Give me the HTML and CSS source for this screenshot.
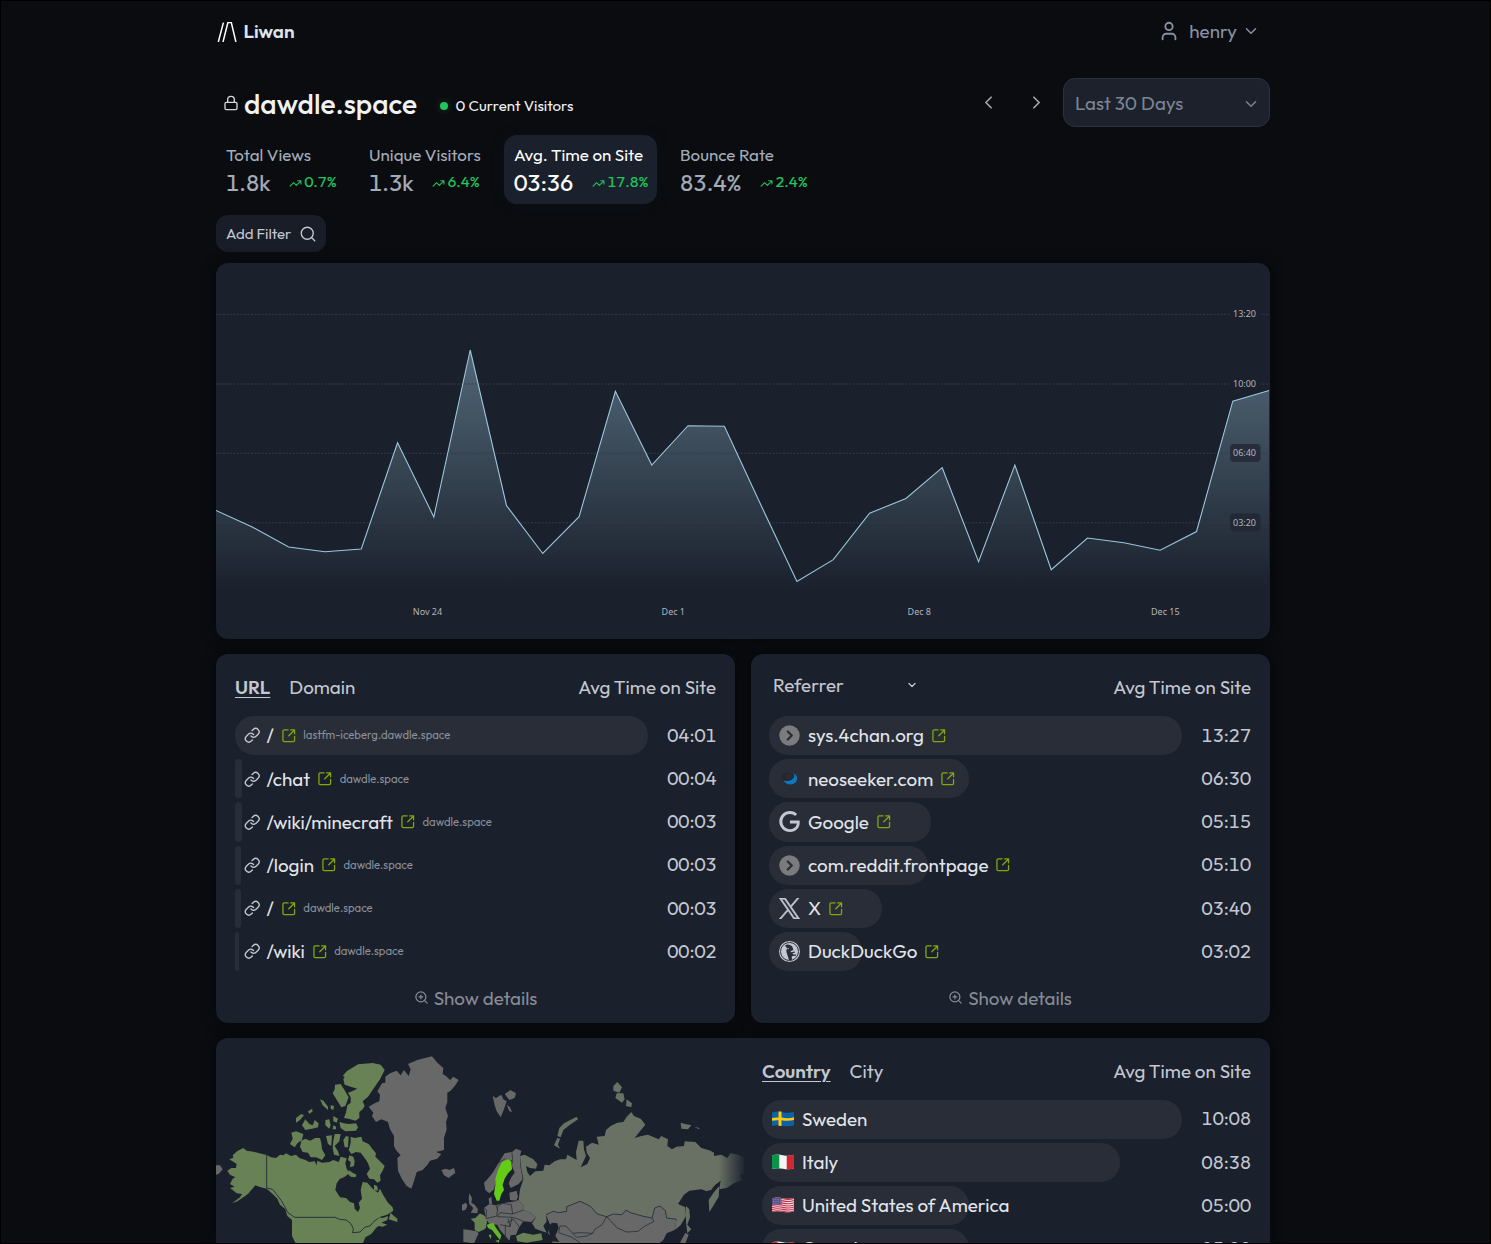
FILE: index.html
```html
<!DOCTYPE html>
<html lang="en">
<head>
<meta charset="utf-8">
<title>Liwan - dawdle.space</title>
<link rel="stylesheet" href="styles.css">
</head>
<body>
<svg class="defs" width="0" height="0" aria-hidden="true">
  <symbol id="ext" viewBox="0 0 24 24"><path d="M21 13v6a2 2 0 0 1-2 2H5a2 2 0 0 1-2-2V5a2 2 0 0 1 2-2h6M21 3l-9 9M15 3h6v6"/></symbol>
  <symbol id="link" viewBox="0 0 24 24"><path d="M10 13a5 5 0 0 0 7.54.54l3-3a5 5 0 0 0-7.07-7.07l-1.72 1.71M14 11a5 5 0 0 0-7.54-.54l-3 3a5 5 0 0 0 7.07 7.07l1.71-1.71"/></symbol>
  <symbol id="trend" viewBox="0 0 24 24"><path d="M16 7h6v6M22 7l-8.5 8.5-5-5L2 17"/></symbol>
  <symbol id="down" viewBox="0 0 24 24"><path d="m6 9 6 6 6-6"/></symbol>
  <symbol id="zoomin" viewBox="0 0 24 24"><circle cx="11" cy="11" r="8"/><path d="m21 21-4.35-4.35M11 8v6M8 11h6"/></symbol>
  <symbol id="go" viewBox="0 0 22 22"><circle cx="11" cy="11" r="10.7" fill="#7b7b7d" stroke="none"/><path d="m9.2 6.8 4.2 4.2-4.2 4.2" stroke="#282d38" stroke-width="2.4"/></symbol>
</svg>
<div class="page">
  <header class="top">
    <a class="brand">
      <svg class="logo" viewBox="0 0 20 20"><path d="M1.3 20 6.4.6M6 20 10.9.6h3.4L18.9 20"/></svg>
      <span>Liwan</span>
    </a>
    <div class="user">
      <svg class="i user-icon" viewBox="0 0 24 24"><circle cx="12" cy="7" r="4"/><path d="M19 21v-2a4 4 0 0 0-4-4H9a4 4 0 0 0-4 4v2"/></svg>
      <span>henry</span>
      <svg class="i user-caret"><use href="#down"/></svg>
    </div>
  </header>

  <section class="title-bar">
    <svg class="i lock" viewBox="0 0 24 24"><rect x="3" y="11" width="18" height="11" rx="2"/><path d="M7 11V7a5 5 0 0 1 10 0v4"/></svg>
    <h1>dawdle.space</h1>
    <span class="dot"></span>
    <span class="current">0 Current Visitors</span>
    <div class="range">
      <svg class="i" viewBox="0 0 24 24"><path d="m15 18-6-6 6-6"/></svg>
      <svg class="i" viewBox="0 0 24 24"><path d="m9 18 6-6-6-6"/></svg>
      <div class="select"><span>Last 30 Days</span><svg class="i"><use href="#down"/></svg></div>
    </div>
  </section>

  <section class="stats">
    <div class="stat views"><h2>Total Views</h2><p><b>1.8k</b><span class="up"><svg class="i"><use href="#trend"/></svg>0.7%</span></p></div>
    <div class="stat visitors"><h2>Unique Visitors</h2><p><b>1.3k</b><span class="up"><svg class="i"><use href="#trend"/></svg>6.4%</span></p></div>
    <div class="stat time active"><h2>Avg. Time on Site</h2><p><b>03:36</b><span class="up"><svg class="i"><use href="#trend"/></svg>17.8%</span></p></div>
    <div class="stat bounce"><h2>Bounce Rate</h2><p><b>83.4%</b><span class="up"><svg class="i"><use href="#trend"/></svg>2.4%</span></p></div>
  </section>

  <button class="filter"><span>Add Filter</span><svg class="i" viewBox="0 0 24 24"><circle cx="11" cy="11" r="8"/><path d="m21 21-4.35-4.35"/></svg></button>

  <section class="card chart">
    <svg viewBox="0 0 1054 376">
      <defs><linearGradient id="area" gradientUnits="userSpaceOnUse" x1="0" y1="87" x2="0" y2="329"><stop offset="0" stop-color="#9cc6db" stop-opacity=".43"/><stop offset="1" stop-color="#9cc6db" stop-opacity="0"/></linearGradient></defs>
      <path transform="scale(.9992 1)" fill="url(#area)" d="M0 247.5 36.3 264 72.7 284 109 288.7 145.4 286 181.7 179.7 218 254 254.4 87 290.7 242.5 327 290.5 363.4 253.7 399.7 128.3 436.1 202 472.4 162.7 508.8 163.2 545.1 241.5 581.4 318.5 617.8 296.7 654.1 250.2 690.5 235.5 726.8 204.7 763.2 298.7 799.5 202 835.9 306.7 872.2 275 908.6 279.7 944.9 287.2 981.3 268.5 1017.6 138.2 1054 127.5V329H0z"/>
      <g class="grid"><path d="M0 51.3H1054M0 121H1054M0 190.3H1054M0 259.8H1054"/></g>
      <path transform="scale(.9992 1)" class="line" d="M0 247.5 36.3 264 72.7 284 109 288.7 145.4 286 181.7 179.7 218 254 254.4 87 290.7 242.5 327 290.5 363.4 253.7 399.7 128.3 436.1 202 472.4 162.7 508.8 163.2 545.1 241.5 581.4 318.5 617.8 296.7 654.1 250.2 690.5 235.5 726.8 204.7 763.2 298.7 799.5 202 835.9 306.7 872.2 275 908.6 279.7 944.9 287.2 981.3 268.5 1017.6 138.2 1054 127.5"/>
      <g class="chip"><rect x="1014" y="42" width="30.500" height="18" rx="4" fill="#1a202c"/><rect x="1014" y="112" width="30.500" height="18" rx="4" fill="#1a202c"/><rect x="1014" y="181" width="30.500" height="18" rx="4"/><rect x="1014" y="250.500" width="30.500" height="18" rx="4" fill="#222835"/></g>
      <g class="tick"><text x="1028.500" y="54">13:20</text><text x="1028.500" y="124">10:00</text><text x="1028.500" y="193">06:40</text><text x="1028.500" y="263">03:20</text>
      <text x="211.500" y="352">Nov 24</text><text x="457.300" y="352">Dec 1</text><text x="703.300" y="352">Dec 8</text><text x="949.300" y="352">Dec 15</text></g>
    </svg>
  </section>

  <div class="pair">
    <section class="card table">
      <div class="head"><span class="tab on">URL</span><span class="tab">Domain</span><span class="metric">Avg Time on Site</span></div>
      <div class="rows urls">
        <div class="row"><div class="track"><div class="bar" style="width:100%"><svg class="i lk"><use href="#link"/></svg><span>/</span><svg class="i ext"><use href="#ext"/></svg><small>lastfm-iceberg.dawdle.space</small></div></div><em>04:01</em></div>
        <div class="row"><div class="track"><div class="bar" style="width:1.7%"><svg class="i lk"><use href="#link"/></svg><span>/chat</span><svg class="i ext"><use href="#ext"/></svg><small>dawdle.space</small></div></div><em>00:04</em></div>
        <div class="row"><div class="track"><div class="bar" style="width:1.6%"><svg class="i lk"><use href="#link"/></svg><span>/wiki/minecraft</span><svg class="i ext"><use href="#ext"/></svg><small>dawdle.space</small></div></div><em>00:03</em></div>
        <div class="row"><div class="track"><div class="bar" style="width:1.5%"><svg class="i lk"><use href="#link"/></svg><span>/login</span><svg class="i ext"><use href="#ext"/></svg><small>dawdle.space</small></div></div><em>00:03</em></div>
        <div class="row"><div class="track"><div class="bar" style="width:1.4%"><svg class="i lk"><use href="#link"/></svg><span>/</span><svg class="i ext"><use href="#ext"/></svg><small>dawdle.space</small></div></div><em>00:03</em></div>
        <div class="row"><div class="track"><div class="bar" style="width:1%"><svg class="i lk"><use href="#link"/></svg><span>/wiki</span><svg class="i ext"><use href="#ext"/></svg><small>dawdle.space</small></div></div><em>00:02</em></div>
      </div>
      <div class="details"><svg class="i"><use href="#zoomin"/></svg>Show details</div>
    </section>

    <section class="card table">
      <div class="head"><span class="dropdown">Referrer<svg class="i"><use href="#down"/></svg></span><span class="metric">Avg Time on Site</span></div>
      <div class="rows refs">
        <div class="row"><div class="track"><div class="bar" style="width:100%"><svg class="i fav"><use href="#go"/></svg><span>sys.4chan.org</span><svg class="i ext"><use href="#ext"/></svg></div></div><em>13:27</em></div>
        <div class="row"><div class="track"><div class="bar" style="width:48.4%"><svg class="fav" viewBox="0 0 22 22"><ellipse cx="11.800" cy="11" rx="7.200" ry="6.200" fill="#0c78c4"/><ellipse cx="9.400" cy="8.900" rx="6.700" ry="4.600" transform="rotate(-14 9.400 8.900)" fill="#292524"/><ellipse cx="10.800" cy="8.900" rx="4.600" ry="3.200" transform="rotate(-14 10.800 8.900)" fill="#272b34"/></svg><span>neoseeker.com</span><svg class="i ext"><use href="#ext"/></svg></div></div><em>06:30</em></div>
        <div class="row"><div class="track"><div class="bar" style="width:39.200%"><svg class="fav" viewBox="0 0 24 24"><path fill="#c3c7d1" d="M12.480 10.920v3.280h7.840c-.24 1.840-.853 3.187-1.787 4.133-1.147 1.147-2.933 2.400-6.053 2.400-4.827 0-8.600-3.893-8.600-8.720s3.773-8.720 8.600-8.720c2.600 0 4.507 1.027 5.907 2.347l2.307-2.307C18.747 1.440 16.133 0 12.480 0 5.867 0 .307 5.387.307 12s5.560 12 12.173 12c3.573 0 6.267-1.173 8.373-3.360 2.160-2.160 2.840-5.213 2.840-7.667 0-.76-.053-1.467-.173-2.053z"/></svg><span>Google</span><svg class="i ext"><use href="#ext"/></svg></div></div><em>05:15</em></div>
        <div class="row"><div class="track"><div class="bar" style="width:38.400%"><svg class="i fav"><use href="#go"/></svg><span>com.reddit.frontpage</span><svg class="i ext"><use href="#ext"/></svg></div></div><em>05:10</em></div>
        <div class="row"><div class="track"><div class="bar" style="width:27.300%"><svg class="fav" viewBox="0 0 24 24"><path fill="#c3c7d1" stroke="#c3c7d1" stroke-width=".7" d="M14.234 10.162 22.977 0h-2.072l-7.591 8.824L7.251 0H.258l9.168 13.343L.258 24H2.330l8.016-9.318L16.749 24h6.993zm-2.837 3.299-.929-1.329L3.076 1.560h3.182l5.965 8.532.929 1.329 7.754 11.090h-3.182z"/></svg><span>X</span><svg class="i ext"><use href="#ext"/></svg></div></div><em>03:40</em></div>
        <div class="row"><div class="track"><div class="bar" style="width:22.600%"><svg class="fav" viewBox="0 0 24 24"><circle cx="12" cy="12" r="12" fill="#c3c7d1"/><circle cx="12" cy="12" r="10.300" fill="none" stroke="#282d38" stroke-width="1.100"/><path fill="#282d38" d="M6.800 5.500 8.500 4.200c2.500-.5 5.800.4 7 3l.9 3-3.400 1.500 1 1.200 4-.8.300 1-3.300 1.300 2.500 1.200 1.500-.7.300 2.300-3.200-.4-1.600 1.300.5 3.300-3.500.6L8.700 13c-.6-2.200-.1-3.800 1-4.600L7.900 6.800z"/><circle cx="10.500" cy="8.700" r=".8" fill="#c3c7d1"/></svg><span>DuckDuckGo</span><svg class="i ext"><use href="#ext"/></svg></div></div><em>03:02</em></div>
      </div>
      <div class="details"><svg class="i"><use href="#zoomin"/></svg>Show details</div>
    </section>
  </div>

  <section class="card geo">
    <svg class="map" viewBox="0 6 1590 618">
      <defs><linearGradient id="fade" gradientUnits="userSpaceOnUse" x1="690" y1="0" x2="792" y2="0"><stop offset="0" stop-color="#697165"/><stop offset=".25" stop-color="#697165"/><stop offset="1" stop-color="#1f2630"/></linearGradient></defs>
      <g class="na">
        <path d="M40 370 52 365 50 358 64 345 82 336 92 344 112 347 130 352 152 357 165 364 180 366 192 356 202 358 210 352 225 360 240 356 250 366 268 372 280 378 296 376 302 388 304 374 318 380 340 378 352 372 368 378 374 362 392 366 388 382 392 398 400 412 384 424 372 428 362 442 358 462 372 484 390 486 402 498 414 502 416 518 426 528 432 516 428 500 438 488 434 462 440 438 454 440 470 458 486 470 492 458 502 478 516 500 530 514 532 524 514 536 488 544 500 546 516 540 514 552 496 560 514 566 500 572 488 570 480 576 466 594 448 604 440 624H240L228 600 228 552 214 540 208 520 192 506 184 488 170 474 152 458 134 454 118 448 104 464 96 474 82 484 64 496 48 502 72 484 78 474 62 472 50 462 42 456 56 452 42 444 50 428 58 424 42 416 34 404 46 396 60 396 62 384z"/>
        <path d="M392 106 426 85 470 81 494 86 506 102 492 130 474 156 456 182 440 196 446 210 440 220 430 228 430 246 418 254 398 248 384 246 390 230 394 208 404 200 404 184 396 170 408 166 424 158 404 152 386 146 382 130 386 122 380 120z"/>
        <path d="M357 146 374 144 384 160 398 184 388 210 376 214 364 194 350 172 356 160zM370 258 384 262 398 264 420 262 426 274 420 284 388 286 374 276zM312 190 322 194 336 212 336 222 320 208zM240 246 256 234 264 238 252 252 240 260zM276 226 288 218 290 226 280 234zM258 268 268 250 280 264 290 268 296 252 308 262 306 274 288 278 268 282zM328 252 340 250 344 268 340 278 328 268zM352 240 366 248 362 260 352 256zM344 208 354 210 352 222 344 218zM226 290 240 286 262 294 258 312 244 322 236 334 222 324 230 308zM256 314 268 308 282 314 298 306 312 306 316 322 318 340 328 358 318 372 300 364 284 364 276 350 260 348 252 332zM330 300 348 298 346 330 336 324zM356 294 374 294 370 316 356 330 366 346 370 360 354 356 350 336 352 314zM382 312 390 300 398 302 396 334 386 334zM404 302 416 306 436 302 440 316 458 324 470 340 480 352 478 362 492 376 506 390 500 404 492 418 494 434 484 440 474 430 460 428 452 414 462 398 456 382 446 366 434 350 420 348 406 354 398 342 404 320zM400 358 412 362 416 376 414 390 402 394 404 378 396 372zM398 402 410 410 422 416 418 424 404 422 396 414zM434 376 446 374 448 384 438 386zM474 446 484 450 486 464 474 462zM524 530 534 540 544 548 544 558 518 550zM352 268 360 272 360 280 350 280z"/>
        <path class="water" d="M388 348 398 356 398 366 382 364zM424 372 434 364 450 372 456 386 446 396 432 398 422 388zM418 410 434 406 448 420 456 434 440 432 430 424z"/>
        <path class="border" d="M152 357V456L170 460 184 478 196 494 206 512 216 530 236 544H358L370 550 390 552 404 562 412 578 410 590 432 588 446 574 462 570 474 556 488 546"/>
      </g>
      <path class="none" d="M576 84 604 72 648 61 664 80 682 96 680 114 690 120 702 132 712 122 728 132 718 148 704 164 694 170 694 198 688 216 696 240 690 258 692 280 684 306 684 342 660 348 676 354 664 368 642 374 636 384 620 402 602 408 594 436 586 458 572 450 558 430 546 404 544 366 554 358 540 342 534 330 534 300 522 280 516 258 496 250 480 258 468 240 472 230 458 212 476 202 490 196 492 176 484 166 498 142 508 140 508 122 522 112 542 104 554 118 564 102 578 120 584 100z"/>
      <path class="none" d="M676 402 690 398 700 402 714 396 718 410 698 426 684 418zM0 388 12 388 20 400 8 414 0 416zM760 472 768 486 766 500 776 506 786 520 784 532 764 530 772 516 760 504 758 486zM738 506 750 500 754 510 748 522 738 524zM742 580 760 582 782 586 788 592 774 622 742 618z"/>
      <path class="fr" d="M764 548 778 546 792 532 800 540 814 544 812 560 806 580 788 588 776 582 776 560z"/>
      <g transform="translate(792 0)">
        <path class="none" d="M38 180 48 186 64 176 70 190 80 196 72 220 62 244 50 226 44 208zM74 174 92 162 108 172 104 186 88 192zM80 206 90 214 96 228 88 226z"/>
        <path class="none" d="M12 440 22 430 38 410 56 380 74 352 96 348 108 338 124 344 120 360 122 396 128 430 116 444 92 456 86 442 94 424 104 410 96 390 98 374 82 370 66 380 58 402 48 432 42 460 28 472 16 462z"/>
        <path class="sw" d="M66 378 84 369 94 376 96 400 84 412 74 428 68 446 72 462 64 474 58 494 50 494 42 474 46 448 46 428 54 402z"/>
        <path class="none" d="M88 470 110 464 114 482 108 494 90 492zM26 488 34 482 36 504 28 504zM12 516 28 504 48 508 68 502 92 498 116 492 130 508 130 522 150 530 168 544 154 558 130 556 116 576 108 596 92 598 88 614 78 602 60 582 52 566 28 564 18 548zM198 536 220 526 236 530 260 526 260 512 300 496 330 510 352 534 380 542 400 534 426 536 438 522 452 530 486 540 516 546 524 516 540 510 556 524 560 546 590 550 584 582 560 592 550 612 536 624H216L220 606 204 592 210 566z"/>
        <path class="ru" d="M120 360 134 356 160 370 172 384 168 398 150 396 138 390 142 408 150 420 166 406 190 404 194 386 208 388 224 376 240 370 258 370 262 356 290 372 288 348 296 314 310 314 312 340 318 360 302 394 322 384 330 366 320 350 318 332 336 320 356 326 350 302 374 300 378 282 392 270 412 260 430 258 440 242 454 228 462 240 482 248 496 266 480 286 464 306 484 300 504 296 536 310 544 300 564 310 562 330 576 340 590 332 612 330 614 316 646 318 664 336 692 344 702 360 720 362 696 460 680 466 664 460 628 464 612 476 594 504 616 514 618 540 602 568 584 582 590 550 560 546 556 524 540 510 524 516 516 546 486 540 452 530 438 522 426 536 400 534 380 542 352 534 330 510 300 496 260 512 260 526 236 530 220 526 198 536 200 556 190 570 200 590 182 584 166 578 156 562 168 544 150 530 130 522 130 508 116 492 120 460 130 430 124 400z"/>
        <path fill="url(#fade)" d="M690 344 702 350 702 360 724 356 742 366 752 352 776 356 792 364 792 410 780 418 788 432 762 442 740 456 718 460 722 434 706 446 690 464z"/>
        <path class="ru" d="M290 242 294 250 270 266 250 282 242 304 232 300 238 276 252 262zM232 306 240 308 234 326 240 338 222 328zM412 138 426 154 418 170 400 164 400 150zM410 172 430 172 434 190 426 200 406 186zM440 190 456 202 454 214 438 210zM602 260 616 264 634 268 624 280 604 278zM642 272 658 276 658 280zM718 450 716 482 696 516 688 528 686 492 702 468zM618 510 628 520 630 544 622 566 634 580 622 592 618 560z"/>
        <path class="none" d="M616 590 626 596 616 622 600 620z"/>
        <path class="fr" d="M0 534 10 536 20 548 18 576 0 584zM108 600 130 590 160 596 184 592 188 612 166 616 140 620 112 616z"/>
        <path class="it" d="M20 566 40 560 46 572 64 598 60 612 52 602 36 582 24 576zM26 596 34 596 32 610zM46 614 58 612 56 620z"/>
        <path class="water" d="M216 560 232 562 236 576 226 600 238 618 216 616 208 590 204 572z"/>
        <path class="edge" d="M12 516 20 522 18 548 50 540 54 510M54 510 68 502 94 506 98 534 60 530 52 542 96 544 90 572 60 566M98 534 130 522M96 544 116 550 130 556M90 572 84 548M76 566 76 600M92 498 110 494M48 508 54 526M82 560 100 550 118 572M98 374 96 350M56 380 76 368M198 536 220 526 236 530 260 526 260 512 300 496 330 510 352 534 380 542 400 534 426 536 438 522 452 530 486 540 516 546 524 516 540 510 556 524 560 546 590 550M380 542 366 566 344 580 338 592 300 590 278 592 258 570 240 570M380 542 412 576 440 588 474 586 492 572 522 556 516 546M240 570 236 590 276 604 300 620M278 592 290 604 320 600 338 592"/>
      </g>
    </svg>
    <div class="places table">
      <div class="head"><span class="tab on">Country</span><span class="tab">City</span><span class="metric">Avg Time on Site</span></div>
      <div class="rows countries">
        <div class="row"><div class="track"><div class="bar" style="width:100%"><svg class="flag" viewBox="0 0 22 16"><path fill="#0b62a8" d="M0 1.500Q5-.3 11 1.200T22 .8V14.500Q17 16 11 14.800T0 15z"/><path fill="#ffcb05" d="M6.500.6h3V6.500Q16 8 22 6.300v2.800q-6 1.300-12.500.2V15l-3-.3V9.200Q3 9 0 9.700V7q3-.8 6.500-.5z"/></svg><span>Sweden</span></div></div><em>10:08</em></div>
        <div class="row"><div class="track"><div class="bar" style="width:85.200%"><svg class="flag" viewBox="0 0 22 16"><path fill="#f4f4f4" d="M0 1.500Q5-.3 11 1.200T22 .8V14.500Q17 16 11 14.800T0 15z"/><path fill="#0b9347" d="M0 1.500Q3.500.2 7.300.6v13.800Q3.500 14 0 15z"/><path fill="#cf2734" d="M14.700 1.500Q18 1.900 22 .8v13.700q-4 1.200-7.300.8z"/></svg><span>Italy</span></div></div><em>08:38</em></div>
        <div class="row"><div class="track"><div class="bar" style="width:49.300%"><svg class="flag" viewBox="0 0 22 16"><path fill="#efe3e6" d="M0 1.500Q5-.3 11 1.200T22 .8V14.500Q17 16 11 14.800T0 15z"/><path fill="none" stroke="#c4314b" stroke-width="1.100" d="M0 2Q5 .2 11 1.700T22 1.300M0 4.200Q5 2.400 11 3.900T22 3.500M0 6.400Q5 4.600 11 6.100T22 5.700M0 8.600Q5 6.800 11 8.300T22 7.900M0 10.700Q5 8.900 11 10.400T22 10M0 12.700Q5 10.900 11 12.400T22 12M0 14.700Q5 12.900 11 14.400T22 14"/><path fill="#514f86" d="M0 1.500Q5 .2 9.500.9v6.600Q4 7 0 8z"/><path stroke="#a9a8c8" stroke-width=".7" stroke-dasharray=".8 1" d="M1 2.800 9 2.200M1 4.600 9 4M1 6.400 9 5.800"/></svg><span>United States of America</span></div></div><em>05:00</em></div>
        <div class="row"><div class="track"><div class="bar" style="width:49.200%"><svg class="flag" viewBox="0 0 22 16"><path fill="#f4f4f4" d="M0 1.500Q5-.3 11 1.200T22 .8V14.500Q17 16 11 14.800T0 15z"/><path fill="#d8202c" d="M0 1.500Q3 .4 5.500.5v14Q3 14 0 15zM16.500 1.500Q19 1.700 22 .8v13.700q-3 1-5.500.9zM11 4l3 4-2.500 3h-1L8 8z"/></svg><span>Canada</span></div></div><em>05:00</em></div>
      </div>
    </div>
  </section>
</div>
</body>
</html>
```

FILE: styles.css
```css
* { box-sizing: border-box; }
html { background: #000; }
body {
  margin: 0;
  height: 1244px;
  overflow: hidden;
  border: 1px solid #000;
  background: #0a0c10;
  color: #c3c7d1;
  font: 18.8px/1.2 Outfit, Lato, sans-serif;
}
h1, h2, p { margin: 0; font-weight: 400; }
.defs { position: absolute; }
.i { fill: none; stroke: currentColor; stroke-width: 2; stroke-linecap: round; stroke-linejoin: round; flex: none; }
.page { width: 1054px; height: 1242px; overflow: clip; overflow-clip-margin: 20px; margin-left: 215px; display: flex; flex-direction: column; }

.top { height: 61px; display: flex; align-items: center; justify-content: space-between; padding: 0 10px 0 1px; }
.brand { display: flex; align-items: center; gap: 6.500px; color: #dfe3eb; font-weight: 600; font-size: 18.900px; }
.logo { width: 20px; height: 20px; fill: none; stroke: #fff; stroke-width: 1.5; }
.user { display: flex; align-items: center; color: #8891a4; }
.user-icon { width: 22px; height: 22px; margin-right: 9px; }
.user-caret { width: 18px; height: 18px; margin-left: 5px; }

.title-bar { height: 73px; display: flex; align-items: center; padding: 11px 0 0 7px; }
.lock { width: 16px; height: 16px; color: #d5d7dc; margin: -3px 5px 0 0; }
h1 { font-size: 28.2px; font-weight: 500; color: #f0f1f3; }
.dot { width: 8px; height: 8px; border-radius: 50%; background: #22c55e; box-shadow: 0 0 0 4px #0b1512; margin: 4px 7.500px 0 23px; }
.current { font-size: 15.100px; color: #f0f1f3; margin-top: 5px; }
.range { margin-left: auto; display: flex; align-items: center; margin-top: -3px; }
.range > .i { width: 21px; height: 21px; color: #a2a5ac; margin-right: 27px; }
.range > .i + .i { margin-right: 16px; }
.select { width: 207px; height: 49px; border: 1px solid #2a3140; border-radius: 12px; background: #1c212c; color: #7b8495; display: flex; align-items: center; justify-content: space-between; padding: 2px 9px 0 11px; }
.select .i { width: 18px; height: 18px; }

.stats { display: flex; gap: 12px; height: 69px; font-variant-numeric: tabular-nums; }
.stat { border-radius: 13px; padding: 10px 0 0 10px; color: #a4acba; white-space: nowrap; }
.stat h2 { font-size: 16.950px; line-height: 20px; }
.stat p { display: flex; align-items: center; height: 35px; }
.stat b { font-weight: 400; font-size: 22.600px; margin-right: 18.500px; -webkit-text-stroke: .2px currentColor; }
.up { display: flex; align-items: center; gap: 2.500px; color: #22c55e; font-size: 15.100px; -webkit-text-stroke: .15px currentColor; }
.up .i { width: 13px; height: 13px; margin-top: 3px; }
.views { width: 131px; }
.visitors { width: 133px; }
.time { width: 153px; margin-right: 1px; }
.active { background: #1a202c; color: #fff; box-shadow: 0 0 12px #0b1016; }

.filter { align-self: flex-start; width: 110px; height: 37px; margin-top: 11px; border: 0; border-radius: 12px; background: #181d28; color: #c3c7d1; font: 15px Outfit, Lato, sans-serif; display: flex; align-items: center; justify-content: space-between; padding: 0 9px 0 10px; }
.filter .i { width: 18px; height: 18px; stroke-width: 1.800; }

.card { background: #1a202c; border-radius: 12px; box-shadow: 0 0 14px #06080b; }
.chart { height: 376px; margin-top: 11px; overflow: hidden; }
.chart svg { display: block; width: 1054px; height: 376px; }
.grid { fill: none; stroke: #343c4b; stroke-width: 1; stroke-dasharray: 2 1.500; }
.line { fill: none; stroke: #9cc6db; stroke-width: 1.1; }
.chip { fill: #272d3a; }
.tick { font: 9px "Noto Sans", sans-serif; fill: #b3b6bd; text-anchor: middle; }

.pair { display: flex; gap: 16px; margin-top: 15px; }
.pair .card { width: 519px; height: 369px; }
.table { padding: 0 19px; }
.pair .table + .table { padding-left: 18px; }
.head { display: flex; align-items: center; height: 62px; padding-top: 5px; }
.tab { margin-right: 19px; }
.on { font-weight: 600; text-decoration: underline; text-decoration-thickness: 1px; text-underline-offset: 3px; }
.metric { margin-left: auto; }
.dropdown { display: flex; align-items: center; justify-content: space-between; width: 145px; margin: -4px 0 0 4px; }
.dropdown .i { width: 12px; height: 12px; stroke-width: 2.500; }
.rows { display: grid; gap: 4px; }
.row { display: flex; align-items: center; height: 39.200px; }
.track { flex: 1; margin-right: 19px; }
.refs .track, .countries .track { margin-right: 20px; }
.bar { height: 39.200px; border-radius: 19px; background: #282d38; color: #e1e4ea; display: flex; align-items: center; white-space: nowrap; }
.bar > * { flex: none; }
.row em { font-style: normal; width: 49px; display: flex; justify-content: flex-end; white-space: nowrap; font-variant-numeric: tabular-nums; padding-bottom: 1px; }
.urls em { margin-right: -.7px; }
.urls .track { margin-right: 19.700px; }
.lk { width: 16.500px; height: 16.500px; margin: 0 6px 0 9px; color: #c3c7d1; }
.ext { width: 15.500px; height: 15.500px; margin: 0 7px 0 7px; color: #84a80c; }
.bar small { font-size: 11.300px; color: #8b909b; padding-top: 1px; }
.fav { width: 21px; height: 21px; margin: 0 8px 0 10px; }
.details { display: flex; justify-content: center; align-items: center; gap: 5px; height: 55px; color: #868b96; }
.details .i { width: 15px; height: 15px; margin-bottom: 2px; }

.geo { height: 205px; margin-top: 15px; display: flex; overflow: hidden; border-radius: 12px 12px 0 0; }
.map { width: 530px; height: 206px; flex: none; }
.na, .fr { fill: #688256; }
.none { fill: #686868; }
.ru { fill: #697165; }
.sw { fill: #62cc16; }
.it { fill: #64b52a; }
.water { fill: #1a202c; }
.border, .edge { fill: none; stroke: #29323a; stroke-width: 3; }
.edge { stroke-width: 2.500; }
.places { flex: 1; padding-left: 16px; }
.places .head { height: 61.500px; }
.flag { width: 22px; height: 16px; margin: 0 8px 0 10px; }
```
